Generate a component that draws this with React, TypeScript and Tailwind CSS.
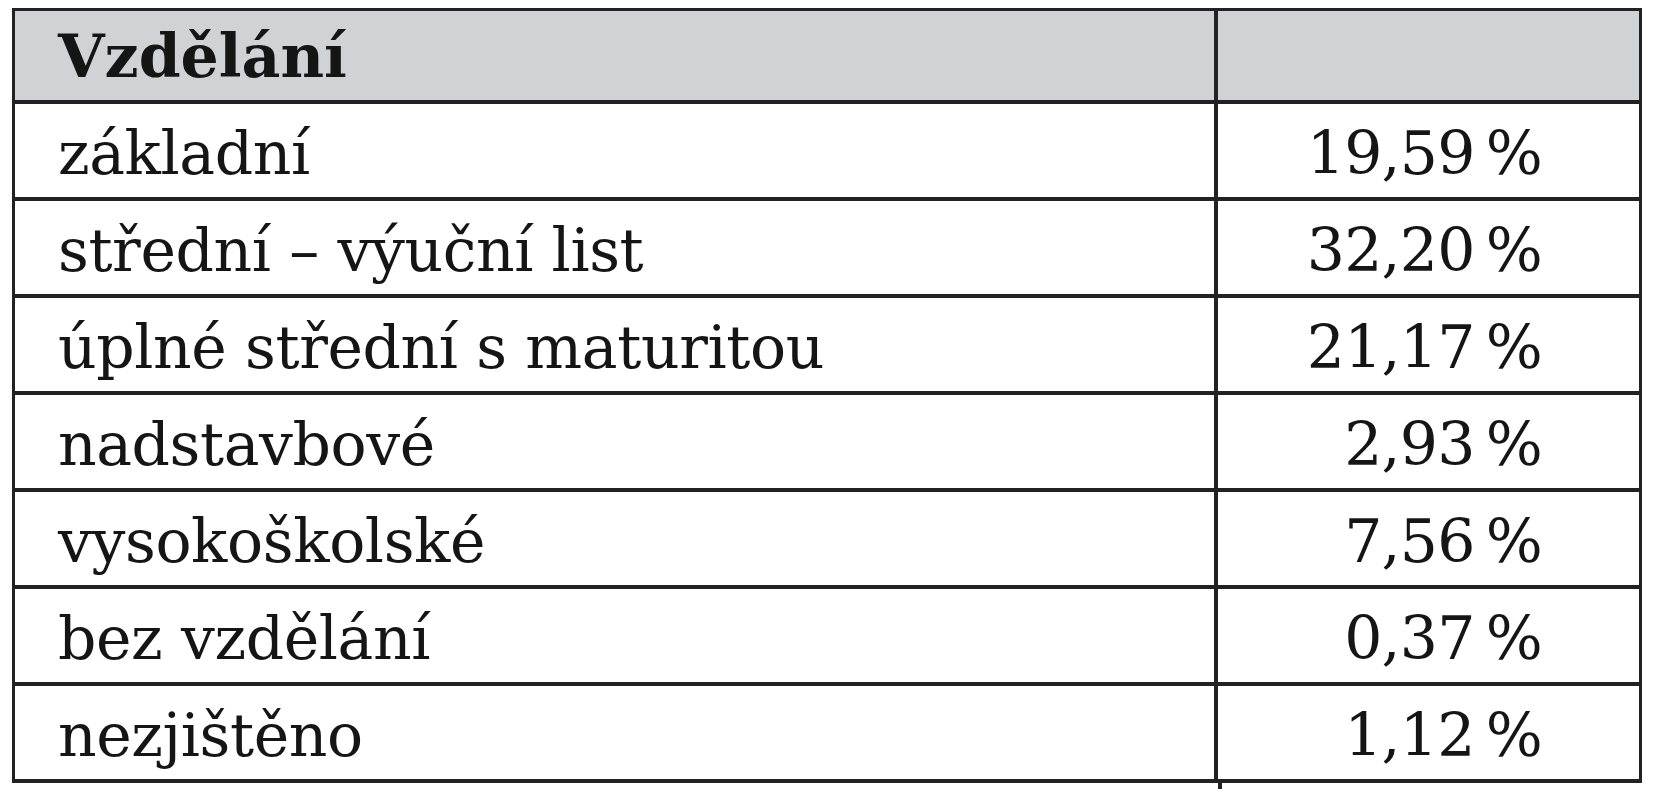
const rows: [string, string][] = [
  ["základní", "19,59\u2009%"],
  ["střední – výuční list", "32,20\u2009%"],
  ["úplné střední s maturitou", "21,17\u2009%"],
  ["nadstavbové", "2,93\u2009%"],
  ["vysokoškolské", "7,56\u2009%"],
  ["bez vzdělání", "0,37\u2009%"],
  ["nezjištěno", "1,12\u2009%"],
];

export default function App() {
  return (
    <div
      className="h-[800px] w-[1658px] bg-white pl-[12px] pt-[8px] text-[#151515]"
      style={{ fontFamily: '"DejaVu Serif", "Liberation Serif", serif' }}
    >
      <div className="w-[1630px] border-[3px] border-b-[4px] border-[#222]">
        <div className="flex h-[89px] items-center bg-[#d1d2d6]">
          <div className="w-[1203px] border-r-[4px] border-[#222] h-full flex items-center pl-[43px] text-[60px] font-bold">
            Vzdělání
          </div>
          <div className="flex-1" />
        </div>
        {rows.map(([label, value]) => (
          <div key={label} className="flex h-[97px] border-t-[4px] border-[#222]">
            <div className="w-[1203px] border-r-[4px] border-[#222] flex items-center pl-[43px] pt-[5px] text-[60px] tracking-[-0.4px]">
              {label}
            </div>
            <div className="flex-1 flex items-center justify-end pr-[97px] pt-[5px] text-[60px] tracking-[-0.8px]">
              {value}
            </div>
          </div>
        ))}
      </div>
      <div className="ml-[1206px] h-[6px] w-[4px] bg-[#222]" />
    </div>
  );
}
